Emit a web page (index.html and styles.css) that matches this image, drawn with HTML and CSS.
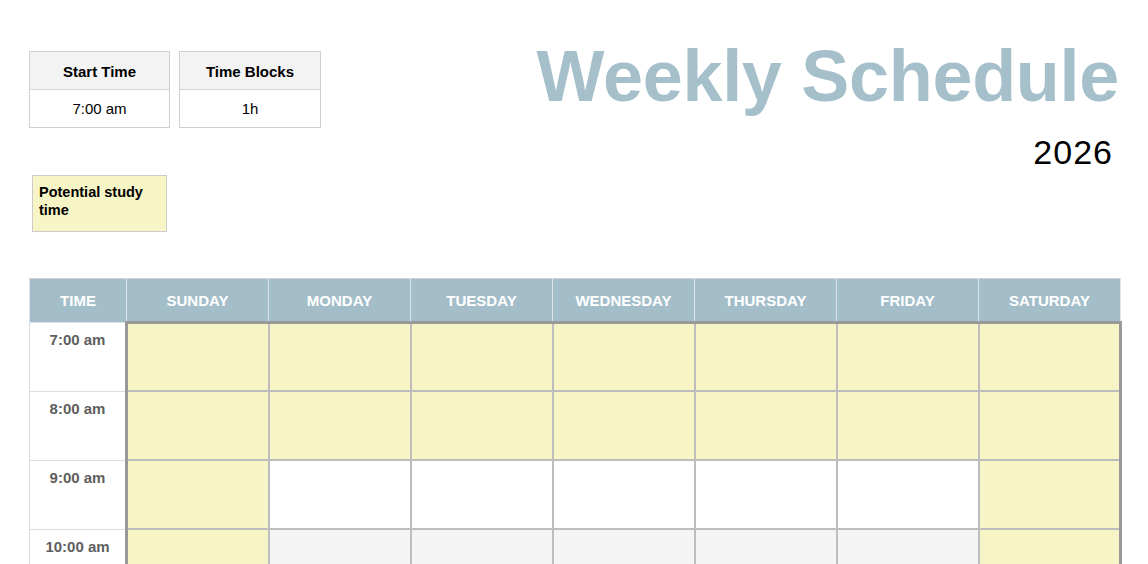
FILE: index.html
```html
<!DOCTYPE html>
<html lang="en">
<head>
<meta charset="utf-8">
<title>Weekly Schedule</title>
<link rel="stylesheet" href="styles.css">
</head>
<body>
<div class="page">
  <header class="top">
    <div class="settings">
      <div class="boxes">
        <div class="box">
          <div class="box-head">Start Time</div>
          <div class="box-val">7:00 am</div>
        </div>
        <div class="box">
          <div class="box-head">Time Blocks</div>
          <div class="box-val">1h</div>
        </div>
      </div>
      <div class="legend">Potential study time</div>
    </div>
    <div class="titles">
      <h1 class="title">Weekly Schedule</h1>
      <div class="year">2026</div>
    </div>
  </header>

  <table class="schedule">
    <colgroup>
      <col class="c-time">
      <col class="c-day"><col class="c-day"><col class="c-day"><col class="c-day"><col class="c-day"><col class="c-day"><col class="c-day">
    </colgroup>
    <thead>
      <tr>
        <th>TIME</th><th>SUNDAY</th><th>MONDAY</th><th>TUESDAY</th><th>WEDNESDAY</th><th>THURSDAY</th><th>FRIDAY</th><th>SATURDAY</th>
      </tr>
    </thead>
    <tbody>
      <tr class="first">
        <td class="time">7:00 am</td>
        <td class="day study first-day"></td><td class="day study"></td><td class="day study"></td><td class="day study"></td><td class="day study"></td><td class="day study"></td><td class="day study last-day"></td>
      </tr>
      <tr>
        <td class="time">8:00 am</td>
        <td class="day study first-day"></td><td class="day study"></td><td class="day study"></td><td class="day study"></td><td class="day study"></td><td class="day study"></td><td class="day study last-day"></td>
      </tr>
      <tr>
        <td class="time">9:00 am</td>
        <td class="day study first-day"></td><td class="day"></td><td class="day"></td><td class="day"></td><td class="day"></td><td class="day"></td><td class="day study last-day"></td>
      </tr>
      <tr class="alt">
        <td class="time">10:00 am</td>
        <td class="day study first-day"></td><td class="day"></td><td class="day"></td><td class="day"></td><td class="day"></td><td class="day"></td><td class="day study last-day"></td>
      </tr>
      <tr>
        <td class="time">11:00 am</td>
        <td class="day study first-day"></td><td class="day"></td><td class="day"></td><td class="day"></td><td class="day"></td><td class="day"></td><td class="day study last-day"></td>
      </tr>
      <tr class="alt">
        <td class="time">12:00 pm</td>
        <td class="day first-day"></td><td class="day"></td><td class="day"></td><td class="day"></td><td class="day"></td><td class="day"></td><td class="day last-day"></td>
      </tr>
    </tbody>
  </table>
</div>
</body>
</html>
```

FILE: styles.css
```css
html, body {
  margin: 0;
  padding: 0;
  background: #ffffff;
}

body {
  font-family: "Liberation Sans", Arial, Helvetica, sans-serif;
  color: #000;
}

.page {
  padding: 40px 27px 40px 29px;
}

.top {
  display: flex;
  justify-content: space-between;
  align-items: flex-start;
}

.settings {
  margin-top: 11px;
  display: flex;
  flex-direction: column;
}

.boxes {
  display: flex;
  gap: 9px;
}

.box {
  width: 141px;
  box-sizing: border-box;
  border: 1px solid #cfcfcf;
  text-align: center;
  font-size: 15px;
}

.box-head {
  height: 37px;
  line-height: 39px;
  background: #f3f3f3;
  border-bottom: 1px solid #d6d6d6;
  font-weight: bold;
}

.box-val {
  height: 37px;
  line-height: 38px;
}

.box + .box {
  width: 142px;
}

.legend {
  margin: 47px 0 0 3px;
  width: 135px;
  height: 57px;
  box-sizing: border-box;
  border: 1px solid #cccccc;
  background: #f7f4c5;
  padding: 7px 6px 0;
  font-size: 14.5px;
  line-height: 18px;
  font-weight: bold;
}

.titles {
  display: flex;
  flex-direction: column;
  align-items: flex-end;
}

.title {
  margin: 0 2px 0 0;
  font-size: 72px;
  line-height: 72px;
  font-weight: bold;
  color: #a5c0ca;
  letter-spacing: -0.3px;
}

.year {
  margin-top: 24px;
  margin-right: 8px;
  font-size: 34px;
  line-height: 32px;
  letter-spacing: 1px;
}

.schedule {
  margin-top: 46px;
  border-collapse: collapse;
  table-layout: fixed;
  width: 1091px;
}

.c-time { width: 97px; }
.c-day { width: 142px; }

.schedule th {
  height: 42px;
  padding: 0;
  background: #a3bec9;
  color: #ffffff;
  font-size: 15px;
  font-weight: bold;
  text-align: center;
  vertical-align: middle;
  border: 1px solid #dbe5e9;
  border-top-color: #d0d0d0;
}

.schedule td {
  padding: 0;
  height: 67px;
}

.schedule tr.first td {
  height: 66px;
}

.schedule td.time {
  border: 1px solid #dddddd;
  background: #ffffff;
  color: #5e5e5e;
  font-size: 15px;
  font-weight: bold;
  text-align: center;
  vertical-align: top;
  padding-top: 8px;
  box-sizing: border-box;
}

.schedule td.day {
  border: 2px solid #bdbdbd;
  background: #ffffff;
}

.schedule tr.alt td.day {
  background: #f4f4f4;
}

.schedule td.day.study,
.schedule tr.alt td.day.study {
  background: #f7f4c5;
}

.schedule td.first-day {
  border-left: 3px solid #999999;
}

.schedule td.last-day {
  border-right: 3px solid #999999;
}

.schedule tr.first td.day {
  border-top: 3px solid #999999;
}
```
